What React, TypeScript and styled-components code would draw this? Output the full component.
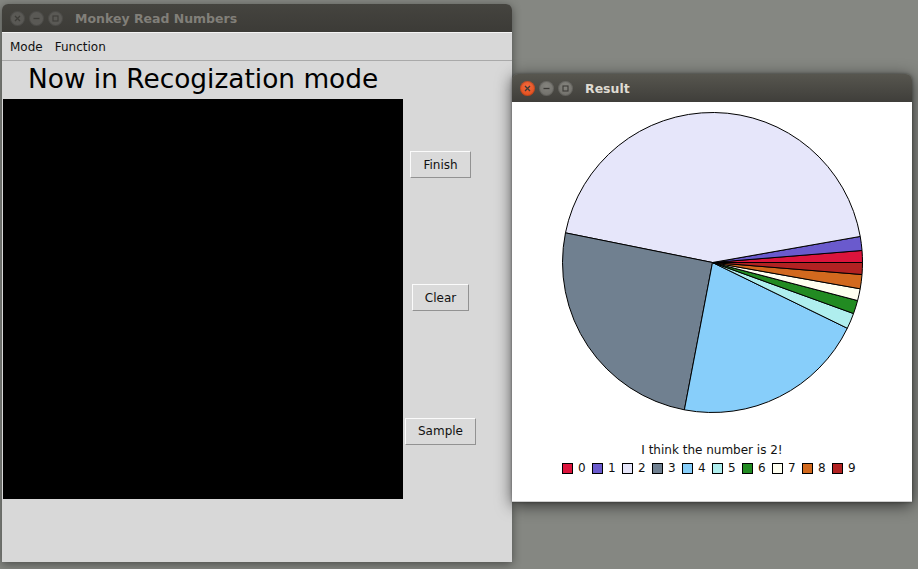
import styled, { createGlobalStyle } from 'styled-components'

const GlobalStyle = createGlobalStyle`
  html, body {
    margin: 0;
    padding: 0;
    width: 918px;
    height: 569px;
    overflow: hidden;
    background: #858782;
  }
  * {
    box-sizing: border-box;
  }
`

const slices = [
  { label: '0', color: '#dc143c', from: 0, to: 4.6 },
  { label: '1', color: '#6a5acd', from: 4.6, to: 10 },
  { label: '2', color: '#e6e6fa', from: 10, to: 168.6 },
  { label: '3', color: '#708090', from: 168.6, to: 259.2 },
  { label: '4', color: '#87cefa', from: 259.2, to: 334 },
  { label: '5', color: '#afeeee', from: 334, to: 340.1 },
  { label: '6', color: '#228b22', from: 340.1, to: 345.3 },
  { label: '7', color: '#fffff0', from: 345.3, to: 349.9 },
  { label: '8', color: '#d2691e', from: 349.9, to: 355.4 },
  { label: '9', color: '#b22222', from: 355.4, to: 360 },
]

const Desktop = styled.div`
  position: relative;
  width: 918px;
  height: 569px;
  background: #858782;
  font-family: 'DejaVu Sans', 'Noto Sans', sans-serif;
  overflow: hidden;
`

const Window = styled.div<{ x: number; y: number; w: number; h: number; active?: boolean }>`
  position: absolute;
  left: ${(p) => p.x}px;
  top: ${(p) => p.y}px;
  width: ${(p) => p.w}px;
  height: ${(p) => p.h}px;
  display: flex;
  flex-direction: column;
  border-radius: 6px 6px 0 0;
  box-shadow: ${(p) =>
    p.active
      ? '0 3px 16px rgba(0, 0, 0, 0.65), 0 0 3px rgba(0, 0, 0, 0.4)'
      : '0 2px 10px rgba(0, 0, 0, 0.45)'};
`

const TitleBar = styled.div<{ active?: boolean }>`
  height: 28px;
  flex: none;
  display: flex;
  align-items: center;
  padding-left: 8px;
  border-radius: 6px 6px 0 0;
  background: ${(p) =>
    p.active
      ? 'linear-gradient(#57564f, #3f3e3a)'
      : 'linear-gradient(#45443f, #3c3b37)'};
`

const Controls = styled.div`
  display: flex;
  gap: 4px;
  margin-right: 12px;
`

const Circle = styled.div<{ tone: 'close' | 'grey' | 'dim' }>`
  width: 15px;
  height: 15px;
  border-radius: 50%;
  display: flex;
  align-items: center;
  justify-content: center;
  background: ${(p) =>
    p.tone === 'close'
      ? 'radial-gradient(circle at 50% 35%, #f26a3f, #dd4814)'
      : p.tone === 'grey'
        ? 'radial-gradient(circle at 50% 35%, #85847e, #6b6a65)'
        : '#5a5955'};
  box-shadow: inset 0 0 0 1px rgba(0, 0, 0, 0.15);
`

const Title = styled.span<{ active?: boolean }>`
  font-family: 'DejaVu Sans', 'Noto Sans', sans-serif;
  font-weight: bold;
  font-size: 12.5px;
  color: ${(p) => (p.active ? '#dfdbd2' : '#817f79')};
`

const MainBody = styled.div`
  flex: 1;
  display: flex;
  flex-direction: column;
  background: #d8d8d8;
`

const MenuBar = styled.div`
  height: 29px;
  flex: none;
  display: flex;
  align-items: center;
  gap: 11px;
  padding: 1px 7px 0;
  border-top: 1px solid #f4f4f4;
  border-bottom: 1px solid #a9a9a9;
  font-size: 12px;
  color: #111;
`

const MenuItem = styled.span`
  padding: 0 0 0 1px;
`

const Heading = styled.div`
  height: 38px;
  flex: none;
  padding: 1px 0 0 26px;
  font-size: 26.4px;
  line-height: 34px;
  color: #000;
`

const Workspace = styled.div`
  display: flex;
  padding-left: 1px;
`

const Canvas = styled.div`
  width: 400px;
  height: 400px;
  background: #000;
`

const ButtonColumn = styled.div`
  width: 75px;
  display: grid;
  grid-template-rows: repeat(3, 1fr);
  justify-items: center;
  align-items: center;
`

const Button = styled.button`
  height: 27px;
  padding: 0 12px;
  margin-top: -2px;
  font-family: 'DejaVu Sans', 'Noto Sans', sans-serif;
  font-size: 12px;
  color: #111;
  background: #dadada;
  border: 1px solid;
  border-color: #fbfbfb #929292 #929292 #fbfbfb;
  border-radius: 0;
`

const ResultBody = styled.div`
  flex: 1;
  display: flex;
  flex-direction: column;
  align-items: center;
  background: #fff;
  border-bottom: 1px solid #cfcfcf;
  padding-top: 10px;
`

const Caption = styled.div`
  margin-top: 30px;
  font-size: 12px;
  line-height: 14px;
  color: #111;
`

const Legend = styled.div`
  display: flex;
  margin-top: 4px;
`

const LegendItem = styled.div`
  width: 30px;
  display: flex;
  align-items: center;
  gap: 5px;
  font-size: 12px;
  line-height: 14px;
  color: #111;
`

const Swatch = styled.span<{ color: string }>`
  width: 11px;
  height: 11px;
  background: ${(p) => p.color};
  border: 1px solid #000;
`

function Glyph({ kind, color }: { kind: 'close' | 'min' | 'max'; color: string }) {
  return (
    <svg width="9" height="9" viewBox="0 0 9 9">
      {kind === 'close' && (
        <path d="M2 2 L7 7 M7 2 L2 7" stroke={color} strokeWidth="1.3" fill="none" />
      )}
      {kind === 'min' && <path d="M1.5 4.5 H7.5" stroke={color} strokeWidth="1.3" />}
      {kind === 'max' && (
        <rect x="2" y="2" width="5" height="5" stroke={color} strokeWidth="1.1" fill="none" />
      )}
    </svg>
  )
}

function WindowControls({ active }: { active?: boolean }) {
  const glyph = active ? '#3c3b37' : '#3e3d39'
  return (
    <Controls>
      <Circle tone={active ? 'close' : 'dim'}>
        <Glyph kind="close" color={glyph} />
      </Circle>
      <Circle tone={active ? 'grey' : 'dim'}>
        <Glyph kind="min" color={glyph} />
      </Circle>
      <Circle tone={active ? 'grey' : 'dim'}>
        <Glyph kind="max" color={glyph} />
      </Circle>
    </Controls>
  )
}

function PieChart() {
  const r = 150
  const c = 150.5
  const point = (deg: number) => {
    const a = (deg * Math.PI) / 180
    return `${(c + r * Math.cos(a)).toFixed(2)} ${(c - r * Math.sin(a)).toFixed(2)}`
  }
  return (
    <svg width="301" height="301" viewBox="0 0 301 301">
      {slices.map((s) => {
        const large = s.to - s.from > 180 ? 1 : 0
        const d = `M${c} ${c} L${point(s.from)} A${r} ${r} 0 ${large} 0 ${point(s.to)} Z`
        return (
          <path key={s.label} d={d} fill={s.color} stroke="#000" strokeWidth="1" strokeLinejoin="round" />
        )
      })}
    </svg>
  )
}

export default function App() {
  return (
    <Desktop>
      <GlobalStyle />
      <Window x={2} y={4} w={510} h={558}>
        <TitleBar>
          <WindowControls />
          <Title>Monkey Read Numbers</Title>
        </TitleBar>
        <MainBody>
          <MenuBar>
            <MenuItem>Mode</MenuItem>
            <MenuItem>Function</MenuItem>
          </MenuBar>
          <Heading>Now in Recogization mode</Heading>
          <Workspace>
            <Canvas />
            <ButtonColumn>
              <Button>Finish</Button>
              <Button>Clear</Button>
              <Button>Sample</Button>
            </ButtonColumn>
          </Workspace>
        </MainBody>
      </Window>

      <Window x={512} y={74} w={400} h={428} active>
        <TitleBar active>
          <WindowControls active />
          <Title active>Result</Title>
        </TitleBar>
        <ResultBody>
          <PieChart />
          <Caption>I think the number is 2!</Caption>
          <Legend>
            {slices.map((s) => (
              <LegendItem key={s.label}>
                <Swatch color={s.color} />
                {s.label}
              </LegendItem>
            ))}
          </Legend>
        </ResultBody>
      </Window>
    </Desktop>
  )
}
